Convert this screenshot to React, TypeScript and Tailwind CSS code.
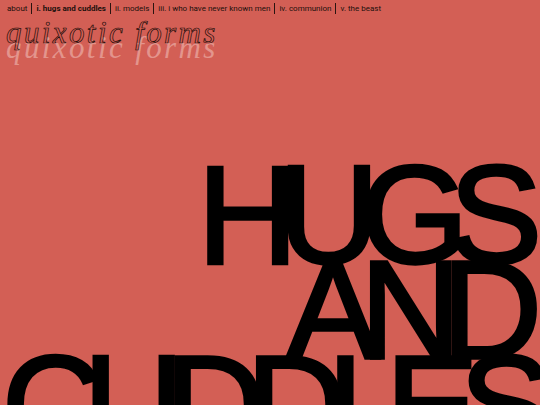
import React from "react";

const links = [
  { label: "about", active: false },
  { label: "i. hugs and cuddles", active: true },
  { label: "ii. models", active: false },
  { label: "iii. i who have never known men", active: false },
  { label: "iv. communion", active: false },
  { label: "v. the beast", active: false },
];

export default function App() {
  return (
    <div className="w-[540px] h-[405px] overflow-hidden bg-[#d35f55] text-[#1b0f0c]">
      <nav className="flex items-center h-[16px] pl-[7px] pt-[1px] text-[8px] leading-none [font-family:Roboto,'Liberation_Sans',sans-serif]">
        {links.map((l, i) => (
          <React.Fragment key={l.label}>
            {i > 0 && <span className="mx-[4px] h-[11px] w-px bg-[#2a1410]" />}
            <span className={l.active ? "font-bold" : "font-normal"}>{l.label}</span>
          </React.Fragment>
        ))}
      </nav>
      <div className="h-[40px] pl-[6px] pt-[2px] text-[31px] leading-[30px] italic tracking-[2.4px] whitespace-nowrap [font-family:'Liberation_Serif',serif] text-transparent [-webkit-text-stroke:0.7px_#1c0d0a] [text-shadow:0_15px_0_rgba(255,240,236,0.38)]">
        quixotic forms
      </div>
      <div className="mt-[111px] pr-[17px] text-right text-[139px] leading-[95px] font-normal tracking-[-19px] text-black [-webkit-text-stroke:3.4px_black] whitespace-nowrap [font-family:'Liberation_Sans',Arial,sans-serif]">
        <div>HUGS</div>
        <div>AND</div>
        <div className="text-left pl-[2px]">CUDDLES</div>
      </div>
    </div>
  );
}
